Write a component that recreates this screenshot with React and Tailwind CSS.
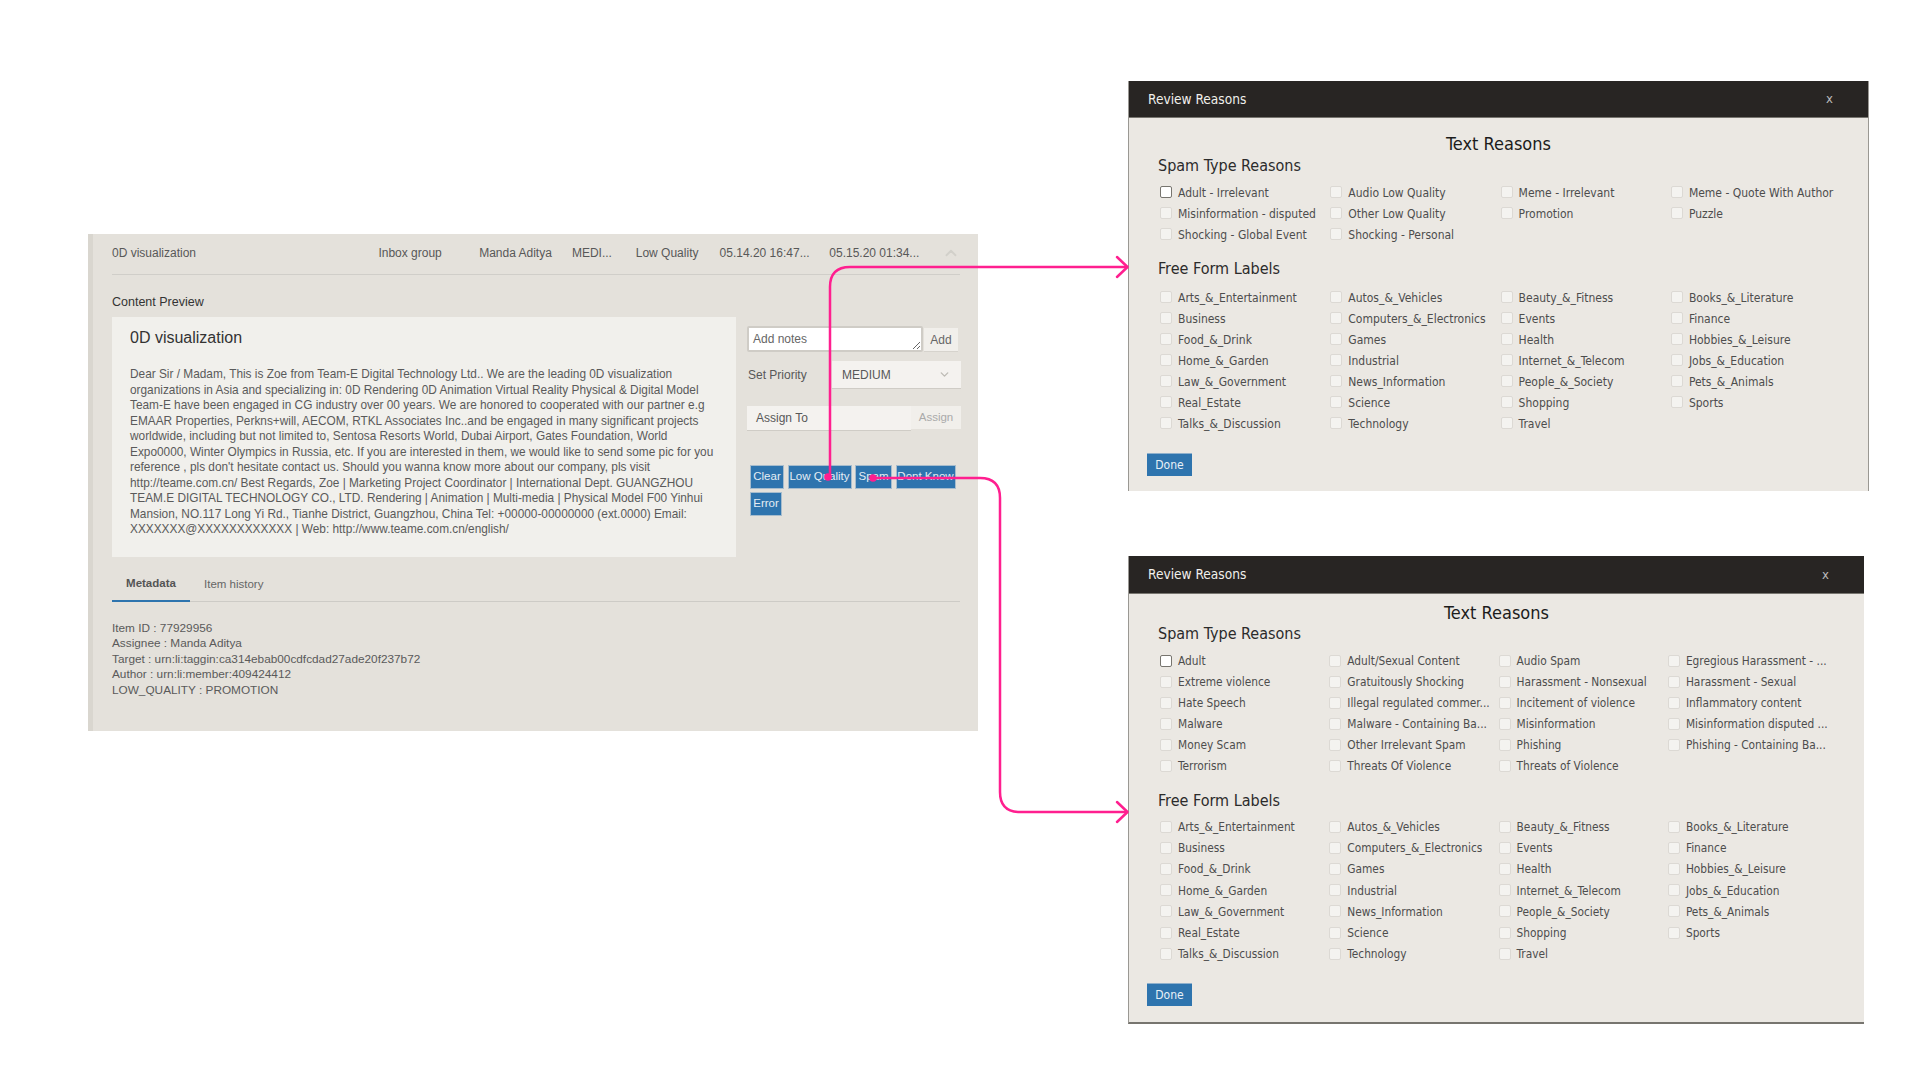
import React from "react";
import { ChevronDown, ChevronUp } from "lucide-react";

const body = [
  "Dear Sir / Madam, This is Zoe from Team-E Digital Technology Ltd.. We are the leading 0D visualization",
  "organizations in Asia and specializing in: 0D Rendering 0D Animation Virtual Reality Physical & Digital Model",
  "Team-E have been engaged in CG industry over 00 years. We are honored to cooperated with our partner e.g",
  "EMAAR Properties, Perkns+will, AECOM, RTKL Associates Inc..and be engaged in many significant projects",
  "worldwide, including but not limited to, Sentosa Resorts World, Dubai Airport, Gates Foundation, World",
  "Expo0000, Winter Olympics in Russia, etc. If you are interested in them, we would like to send some pic for you",
  "reference , pls don't hesitate contact us. Should you wanna know more about our company, pls visit",
  "http://teame.com.cn/ Best Regards, Zoe | Marketing Project Coordinator | International Dept. GUANGZHOU",
  "TEAM.E DIGITAL TECHNOLOGY CO., LTD. Rendering | Animation | Multi-media | Physical Model F00 Yinhui",
  "Mansion, NO.117 Long Yi Rd., Tianhe District, Guangzhou, China Tel: +00000-00000000 (ext.0000) Email:",
  "XXXXXXX@XXXXXXXXXXXX | Web: http://www.teame.com.cn/english/",
];

const meta = [
  "Item ID : 77929956",
  "Assignee : Manda Aditya",
  "Target : urn:li:taggin:ca314ebab00cdfcdad27ade20f237b72",
  "Author : urn:li:member:409424412",
  "LOW_QUALITY : PROMOTION",
];

const freeForm = [
  "Arts_&_Entertainment", "Autos_&_Vehicles", "Beauty_&_Fitness", "Books_&_Literature",
  "Business", "Computers_&_Electronics", "Events", "Finance",
  "Food_&_Drink", "Games", "Health", "Hobbies_&_Leisure",
  "Home_&_Garden", "Industrial", "Internet_&_Telecom", "Jobs_&_Education",
  "Law_&_Government", "News_Information", "People_&_Society", "Pets_&_Animals",
  "Real_Estate", "Science", "Shopping", "Sports",
  "Talks_&_Discussion", "Technology", "Travel",
];

const spamA = [
  "Adult - Irrelevant", "Audio Low Quality", "Meme - Irrelevant", "Meme - Quote With Author",
  "Misinformation - disputed", "Other Low Quality", "Promotion", "Puzzle",
  "Shocking - Global Event", "Shocking - Personal",
];

const spamB = [
  "Adult", "Adult/Sexual Content", "Audio Spam", "Egregious Harassment - ...",
  "Extreme violence", "Gratuitously Shocking", "Harassment - Nonsexual", "Harassment - Sexual",
  "Hate Speech", "Illegal regulated commer...", "Incitement of violence", "Inflammatory content",
  "Malware", "Malware - Containing Ba...", "Misinformation", "Misinformation disputed ...",
  "Money Scam", "Other Irrelevant Spam", "Phishing", "Phishing - Containing Ba...",
  "Terrorism", "Threats Of Violence", "Threats of Violence",
];

function ReasonGrid({ items, focusFirst, gridClass }) {
  return (
    <div className={"grid auto-rows-[21.1px] " + gridClass}>
      {items.map((t, i) => (
        <label key={t + i} className="flex items-center whitespace-nowrap text-[#4d4d4d]">
          <input
            type="checkbox"
            className={
              "appearance-none w-3 h-3 -mt-[2px] rounded-[2px] bg-[#f4f3f0] border shrink-0 mr-[6px] " +
              (i === 0 && focusFirst ? "border-[#77756f] bg-white" : "border-[#dcd9d4]")
            }
          />
          <span>{t}</span>
        </label>
      ))}
    </div>
  );
}

function Modal({ spam, widthClass, headerClass, gridClass, pads, closeClass, bottomBorder }) {
  return (
    <div
      className={
        "bg-[#ebe8e3] border-l border-r border-[#9a9893] font-['DejaVu_Sans',sans-serif] [font-stretch:condensed] " +
        widthClass + " " + (bottomBorder ? "border-b-2 border-b-[#77756f] border-r-0" : "")
      }
    >
      <div className={"bg-[#282523] border-b border-[#77756f] flex items-center justify-between pl-[19px] text-[13.6px] text-[#f1f0ec] " + headerClass}>
        <span>Review Reasons</span>
        <span className={"text-[13px] text-[#bbb] " + closeClass}>x</span>
      </div>
      <div className={"text-center text-[18px] leading-5 text-[#1c1c1c] " + pads.title}>Text Reasons</div>
      <div className={"pl-[29px] text-[16px] leading-5 text-[#2b2b2b] " + pads.spam}>Spam Type Reasons</div>
      <div className={"pl-[31px] " + pads.label + " " + pads.grid1}>
        <ReasonGrid items={spam} focusFirst gridClass={gridClass} />
      </div>
      <div className={"pl-[29px] text-[16px] leading-5 text-[#2b2b2b] " + pads.free}>Free Form Labels</div>
      <div className={"pl-[31px] " + pads.label + " " + pads.grid2}>
        <ReasonGrid items={freeForm} gridClass={gridClass} />
      </div>
      <div className={"pl-[18px] " + pads.done}>
        <button className="block w-[45px] h-[23px] bg-[#2e74ae] border-t border-[#8fb0cc] text-[12px] text-[#e8f0f6]">Done</button>
      </div>
    </div>
  );
}

function Btn({ children, w }) {
  return (
    <button className={"h-6 bg-[#2e74ae] border border-[#a6bccd] text-[11.5px] text-[#e4edf4] whitespace-nowrap " + w}>
      {children}
    </button>
  );
}

function Panel() {
  return (
    <div className="w-[890px] h-[497px] bg-[#e4e1db] border-l-[5px] border-[#d9d6cf] pl-[19px] pr-[18px] text-[12px] text-[#585858] font-['Liberation_Sans',sans-serif]">
      <div className="h-[41px] pb-[3px] flex items-center border-b border-[#d0cec9] whitespace-nowrap">
        <span className="w-[267px]">0D visualization</span>
        <span className="w-[101px]">Inbox group</span>
        <span className="w-[93px]">Manda Aditya</span>
        <span className="w-[64px]">MEDI...</span>
        <span className="w-[84px]">Low Quality</span>
        <span className="w-[110px]">05.14.20 16:47...</span>
        <span className="w-[113px]">05.15.20 01:34...</span>
        <ChevronUp className="w-[18px] h-[18px] text-[#d2d0ca]" strokeWidth={2.5} />
      </div>
      <div className="mt-[19px] h-[23px] pb-[6px] flex items-center text-[12.5px] text-[#333]">Content Preview</div>
      <div className="flex">
        <div className="w-[624px] h-[240px] bg-[#f1f0ec] px-[18px] pt-[10px] shrink-0">
          <div className="text-[16px] leading-[22px] text-[#333]">0D visualization</div>
          <div className="mt-[18px] text-[11.85px] leading-[15.55px] text-[#5a5a5a] whitespace-nowrap">
            {body.map((l) => (
              <div key={l}>{l}</div>
            ))}
          </div>
        </div>
        <div className="ml-[11px] w-[214px] pt-[9px]">
          <div className="flex items-end">
            <textarea
              placeholder="Add notes"
              className="w-[176px] h-[26px] bg-white border-2 border-[#cfccc6] rounded-[2px] pl-[4px] pt-[3px] text-[12px] leading-[16px] placeholder:text-[#666] outline-none"
            />
            <button className="ml-[1px] w-[34px] h-6 bg-[#f1efeb] border-b border-[#d6d3cd] text-[12px] text-[#666]">Add</button>
          </div>
          <div className="mt-[9px] flex items-center h-[28px]">
            <span className="w-[85px] pl-[1px]">Set Priority</span>
            <div className="w-[129px] h-[28px] bg-[#f4f2ef] border-b border-[#cfccc6] flex items-center justify-between pl-[10px] pr-[10px]">
              <span>MEDIUM</span>
              <ChevronDown className="w-[13px] h-[13px] text-[#bdbbb5]" strokeWidth={2.5} />
            </div>
          </div>
          <div className="mt-[17px] flex">
            <div className="w-[164px] h-[25px] bg-[#f4f2ef] border-b border-[#cfccc6] pl-[9px] flex items-center">Assign To</div>
            <div className="w-[50px] h-[23px] bg-[#f1efeb] flex items-center justify-center text-[11.5px] text-[#aaa]">Assign</div>
          </div>
          <div className="mt-[34px] ml-[3px] flex flex-wrap gap-x-[3.5px] gap-y-[3px] w-[211px]">
            <Btn w="w-[34px]">Clear</Btn>
            <Btn w="w-[64px]">Low Quality</Btn>
            <Btn w="w-[37px]">Spam</Btn>
            <Btn w="w-[60px]">Dont Know</Btn>
            <Btn w="w-[32px]">Error</Btn>
          </div>
        </div>
      </div>
      <div className="mt-[11px] h-[34px] flex items-stretch border-b border-[#cdcbc6]">
        <div className="w-[78px] -mb-px border-b-2 border-[#2e74ae] flex items-center justify-center font-bold text-[11.5px] text-[#555]">Metadata</div>
        <div className="ml-[14px] flex items-center text-[11.5px] text-[#666]">Item history</div>
      </div>
      <div className="mt-[19px] text-[11.8px] leading-[15.4px] text-[#5a5a5a]">
        {meta.map((m) => (
          <div key={m}>{m}</div>
        ))}
      </div>
    </div>
  );
}

function Arrows() {
  return (
    <svg className="absolute left-0 top-0 pointer-events-none" width="1920" height="1080" fill="none" stroke="#ff1f8f" strokeWidth="2.5" strokeLinecap="round" strokeLinejoin="round">
      <path d="M830 477 V287 Q830 267 850 267 H1127" />
      <path d="M1117 257 L1127.5 267 L1117 277" />
      <circle cx="828" cy="477" r="2.5" fill="#ff1f8f" />
      <path d="M873 478 H980 Q1000 478 1000 498 V792 Q1000 812 1020 812 H1127" />
      <path d="M1117 802 L1127.5 812 L1117 822" />
      <circle cx="873" cy="478" r="2.5" fill="#ff1f8f" />
    </svg>
  );
}

export default function App() {
  return (
    <div className="relative w-[1920px] h-[1080px] bg-white overflow-hidden flex items-start">
      <div className="ml-[88px] mt-[234px] shrink-0">
        <Panel />
      </div>
      <div className="ml-[150px] shrink-0">
        <div className="mt-[81px]">
          <Modal
            spam={spamA}
            widthClass="w-[741px] h-[410px]"
            headerClass="h-[37px]"
            gridClass="grid-cols-[repeat(4,170.3px)]"
            closeClass="mr-[35px]"
            pads={{ label: "text-[12px]", title: "pt-[16px]", spam: "pt-[2px]", grid1: "pt-[6px]", free: "pt-[14px]", grid2: "pt-[8px]", done: "pt-[18px]" }}
          />
        </div>
        <div className="mt-[65px]">
          <Modal
            spam={spamB}
            widthClass="w-[736px] h-[468px]"
            headerClass="h-[38px]"
            gridClass="grid-cols-[repeat(4,169.3px)]"
            closeClass="mr-[35px]"
            bottomBorder
            pads={{ label: "text-[11.8px]", title: "pt-[9px]", spam: "pt-[1px]", grid1: "pt-[7px]", free: "pt-[13px]", grid2: "pt-[7px]", done: "pt-[18px]" }}
          />
        </div>
      </div>
      <Arrows />
    </div>
  );
}
